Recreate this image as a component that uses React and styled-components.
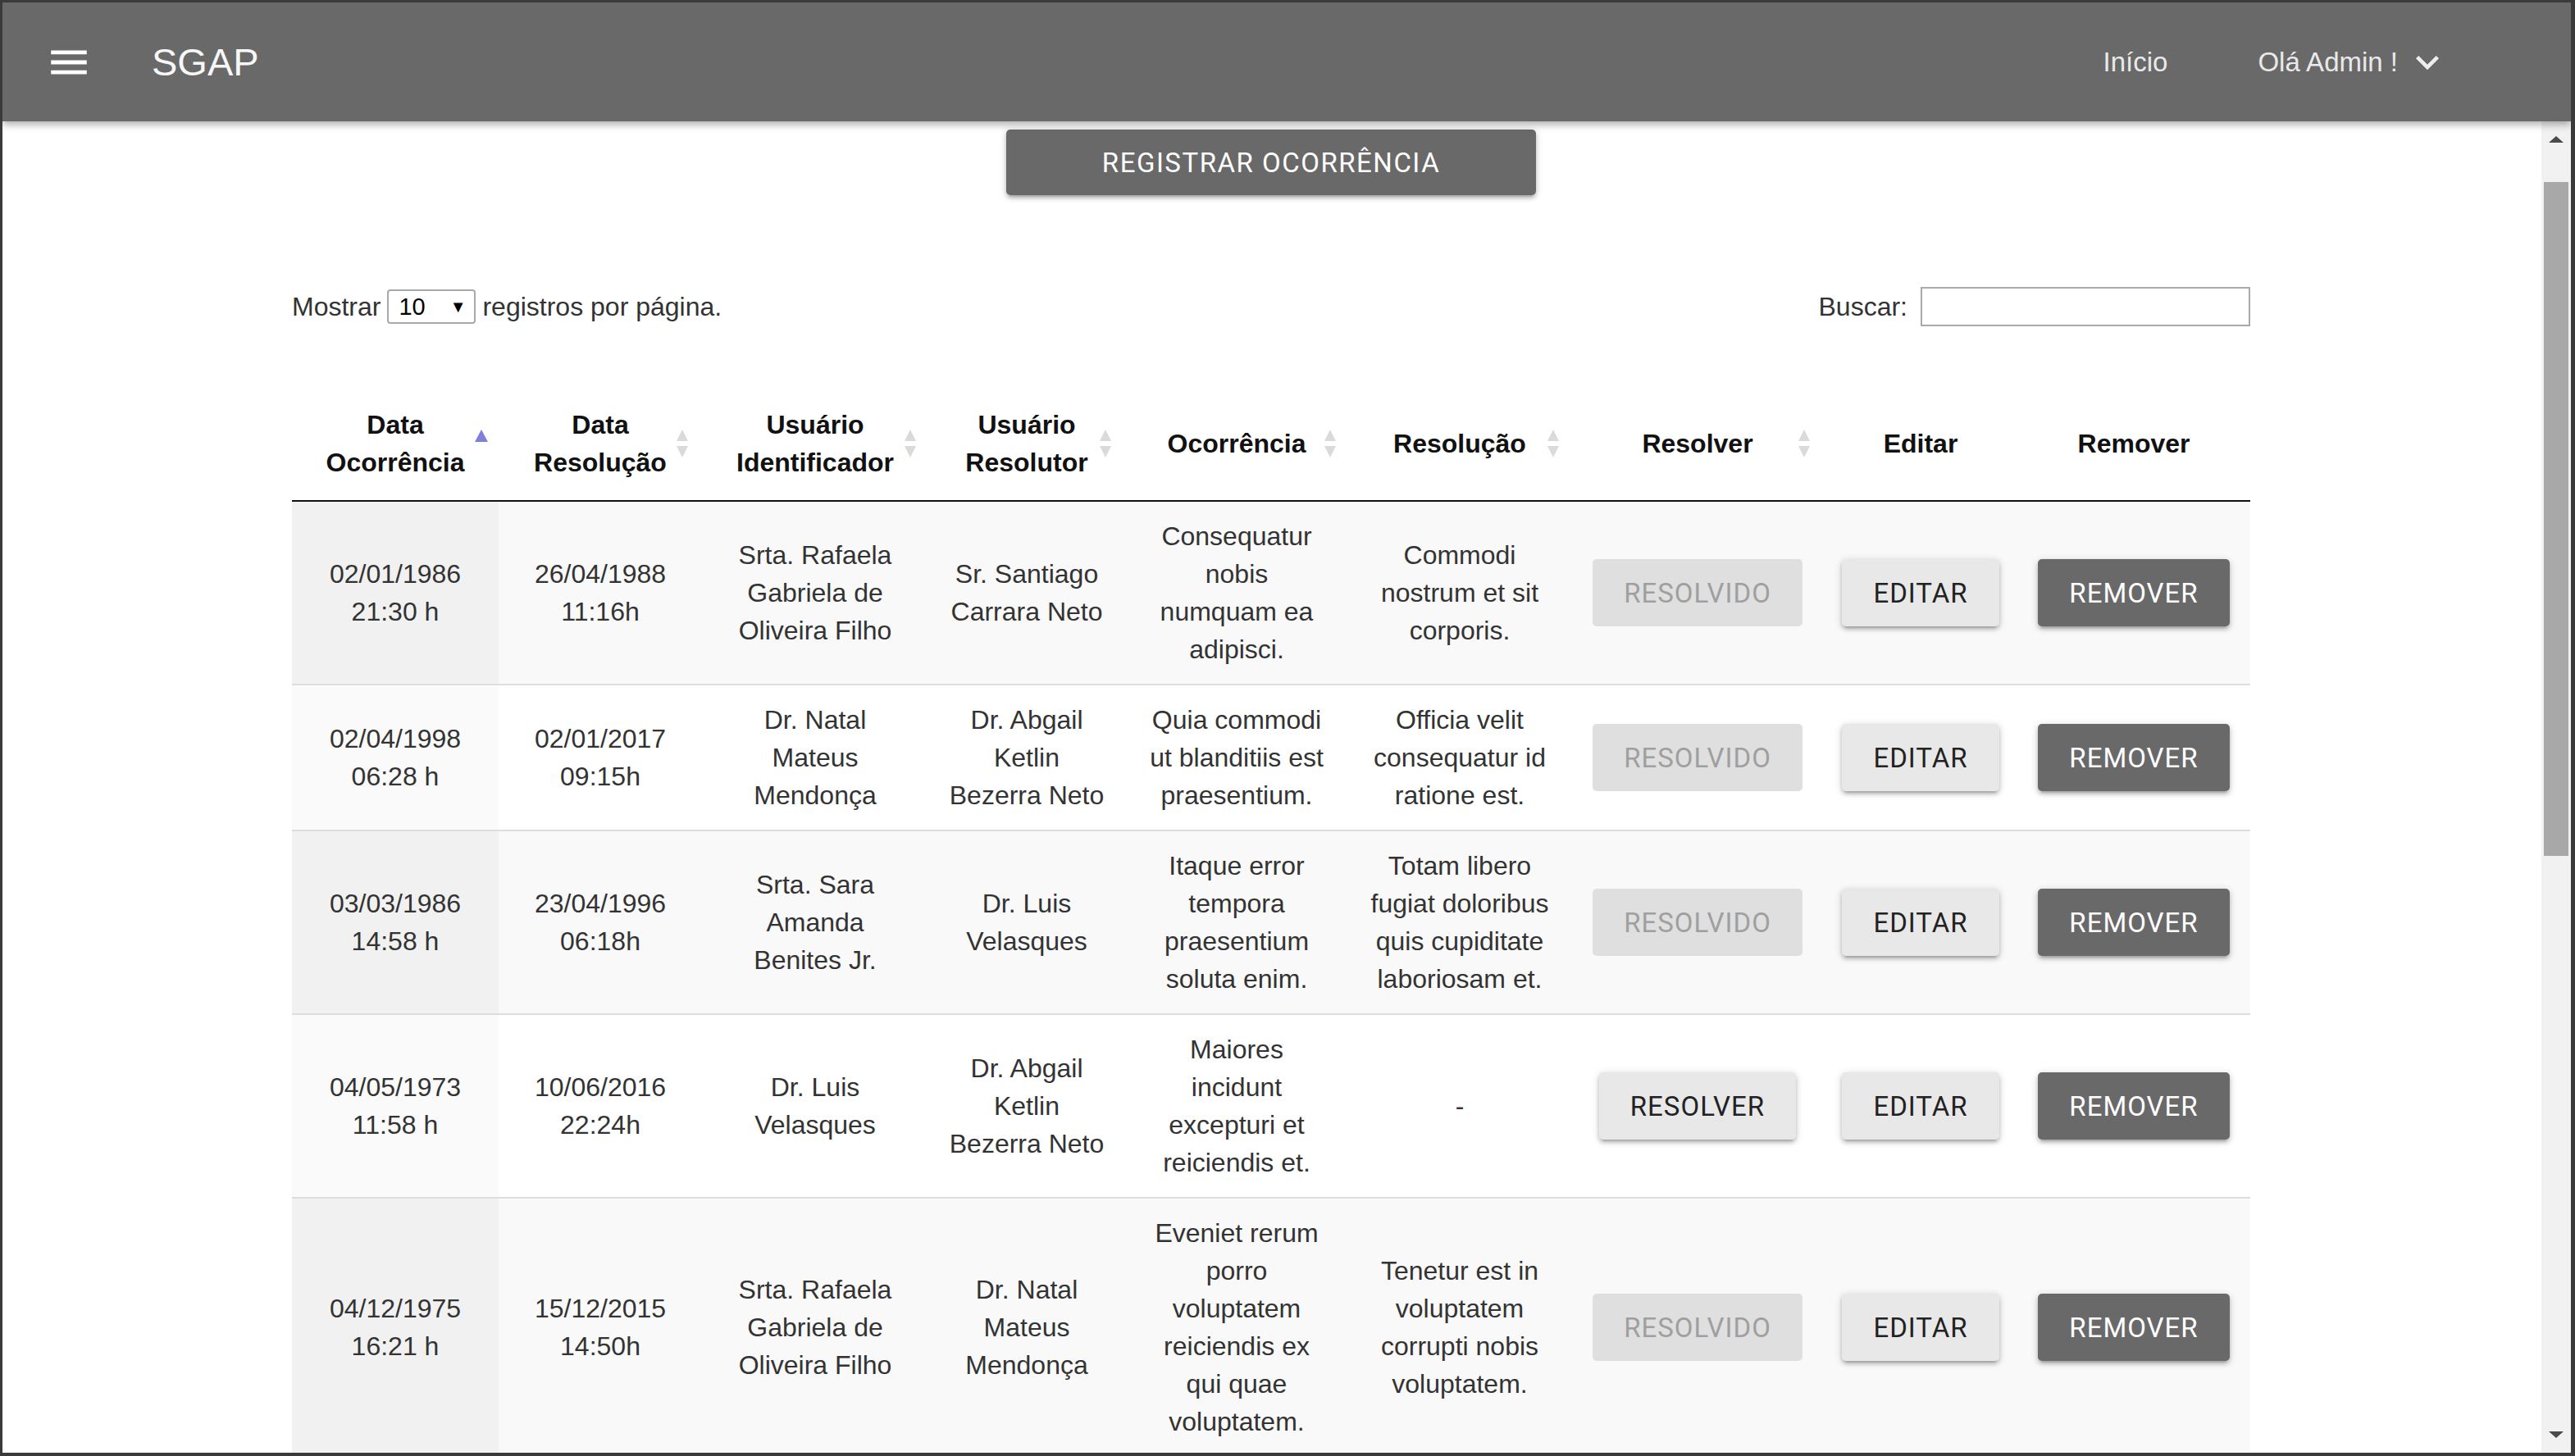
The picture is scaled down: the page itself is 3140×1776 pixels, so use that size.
import React from "react";
import styled, { createGlobalStyle } from "styled-components";

const GlobalStyle = createGlobalStyle`
  html, body { margin: 0; padding: 0; background: #fff; }
  body { font-family: "Liberation Sans", Arial, sans-serif; overflow: hidden; }
  * { box-sizing: border-box; }
`;

const Frame = styled.div`
  width: 3140px;
  height: 1776px;
  border-style: solid;
  border-color: #3a3a3a;
  border-width: 3px 5px 4px 3px;
  display: flex;
  flex-direction: column;
  overflow: hidden;
  background: #fff;
`;

const NavBar = styled.header`
  flex: 0 0 145px;
  background: #696969;
  display: flex;
  align-items: center;
  padding: 0 147px 0 52px;
  position: relative;
  z-index: 2;
  box-shadow: 0 4px 9px rgba(0, 0, 0, 0.32);
`;

const MenuIcon = styled.svg`
  width: 58px;
  height: 58px;
  fill: #fff;
  flex: 0 0 auto;
`;

const Brand = styled.div`
  margin-left: 72px;
  font-size: 47px;
  color: #f7f7f7;
`;

const NavLinks = styled.nav`
  margin-left: auto;
  display: flex;
  align-items: center;
  gap: 110px;
`;

const NavLink = styled.span`
  display: flex;
  align-items: center;
  gap: 8px;
  font-size: 33px;
  color: #e9e9e9;
`;

const Chevron = styled.svg`
  width: 56px;
  height: 56px;
  fill: #eeeeee;
`;

const Body = styled.div`
  flex: 1;
  display: flex;
  min-height: 0;
`;

const Main = styled.main`
  flex: 1;
  overflow: hidden;
  display: flex;
  flex-direction: column;
  align-items: center;
  padding-right: 2px;
`;

const ScrollTrack = styled.div`
  flex: 0 0 36px;
  background: #f1f1f1;
  display: flex;
  flex-direction: column;
  align-items: center;
`;

const ArrowBox = styled.div`
  height: 44px;
  width: 100%;
  display: flex;
  align-items: center;
  justify-content: center;
  margin-top: ${(p) => (p.$down ? "auto" : "0")};
`;

const Arrow = styled.div`
  width: 0;
  height: 0;
  border-left: 9px solid transparent;
  border-right: 9px solid transparent;
  ${(p) =>
    p.$down
      ? "border-top: 8px solid #4a4a4a;"
      : "border-bottom: 8px solid #4a4a4a;"}
`;

const Thumb = styled.div`
  width: 30px;
  height: 822px;
  margin-top: 30px;
  background: #a8a8a8;
`;

const btnShadow =
  "0 4px 4px 0 rgba(0,0,0,0.14), 0 6px 2px -4px rgba(0,0,0,0.12), 0 2px 10px 0 rgba(0,0,0,0.2)";

const RegisterButton = styled.button`
  margin-top: 10px;
  width: 646px;
  height: 80px;
  border: none;
  border-radius: 5px;
  background: #696969;
  color: #fff;
  font-family: Roboto, "Liberation Sans", sans-serif;
  font-size: 33px;
  letter-spacing: 1.5px;
  box-shadow: ${btnShadow};
  flex: 0 0 auto;
`;

const Wrapper = styled.section`
  width: 2388px;
  margin-top: 112px;
  flex: 0 0 auto;
`;

const Controls = styled.div`
  display: flex;
  justify-content: space-between;
  align-items: center;
  height: 48px;
  font-size: 32px;
  color: #333;
`;

const ControlLabel = styled.label`
  display: flex;
  align-items: center;
  gap: ${(p) => p.$gap || 8}px;
`;

const SelectBox = styled.div`
  position: relative;
  width: 108px;
  height: 42px;
`;

const Select = styled.select`
  appearance: none;
  width: 100%;
  height: 100%;
  border: 2px solid #a9a9a9;
  border-radius: 4px;
  background: #fff;
  font-family: "Liberation Sans", Arial, sans-serif;
  font-size: 29px;
  color: #000;
  padding: 0 0 0 12px;
  margin: 0;
`;

const SelectCaret = styled.span`
  position: absolute;
  right: 12px;
  top: 50%;
  transform: translateY(-50%);
  font-size: 20px;
  color: #000;
  pointer-events: none;
`;

const SearchInput = styled.input`
  width: 402px;
  height: 48px;
  border: 2px solid #a9a9a9;
  background: #fff;
  margin: 0;
  padding: 0 6px;
  font-size: 28px;
`;

const Table = styled.table`
  margin-top: 74px;
  width: 2388px;
  table-layout: fixed;
  border-collapse: separate;
  border-spacing: 0;
`;

const Th = styled.th`
  position: relative;
  font-size: 32px;
  font-weight: bold;
  line-height: 46px;
  color: #111;
  text-align: center;
  vertical-align: middle;
  padding: 23px 10px;
  border-bottom: 2px solid #111;
`;

const SortIcon = styled.svg`
  position: absolute;
  right: ${(p) => p.$right}px;
  top: 50%;
  width: 18px;
  height: 36px;
  transform: translateY(-50%);
`;

const Td = styled.td`
  font-size: 32px;
  line-height: 46px;
  color: #333;
  text-align: center;
  vertical-align: middle;
  padding: 19px 16px;
  border-top: ${(p) => (p.$first ? "none" : "2px solid #dddddd")};
  background: ${(p) =>
    p.$odd ? (p.$sorted ? "#f1f1f1" : "#f9f9f9") : p.$sorted ? "#fafafa" : "#ffffff"};
`;

const ActionButton = styled.button`
  height: 82px;
  padding: 0 38px;
  border: none;
  border-radius: 5px;
  font-family: Roboto, "Liberation Sans", sans-serif;
  font-size: 33px;
  letter-spacing: 1px;
  white-space: nowrap;
  background: ${(p) =>
    p.$variant === "dark" ? "#696969" : p.$variant === "disabled" ? "#dfdfdf" : "#e8e8e8"};
  color: ${(p) =>
    p.$variant === "dark" ? "#ffffff" : p.$variant === "disabled" ? "#9f9f9f" : "#222222"};
  box-shadow: ${(p) => (p.$variant === "disabled" ? "none" : btnShadow)};
`;

const colWidths = [252, 248, 276, 240, 272, 272, 308, 236, 284];

const headers = [
  { lines: ["Data", "Ocorrência"], sort: "asc", right: 12 },
  { lines: ["Data", "Resolução"], sort: "both", right: 15 },
  { lines: ["Usuário", "Identificador"], sort: "both", right: 13 },
  { lines: ["Usuário", "Resolutor"], sort: "both", right: 15 },
  { lines: ["Ocorrência"], sort: "both", right: 13 },
  { lines: ["Resolução"], sort: "both", right: 13 },
  { lines: ["Resolver"], sort: "both", right: 15 },
  { lines: ["Editar"] },
  { lines: ["Remover"] },
];

const rows = [
  {
    cells: [
      ["02/01/1986", "21:30 h"],
      ["26/04/1988", "11:16h"],
      ["Srta. Rafaela", "Gabriela de", "Oliveira Filho"],
      ["Sr. Santiago", "Carrara Neto"],
      ["Consequatur", "nobis", "numquam ea", "adipisci."],
      ["Commodi", "nostrum et sit", "corporis."],
    ],
    resolved: true,
  },
  {
    cells: [
      ["02/04/1998", "06:28 h"],
      ["02/01/2017", "09:15h"],
      ["Dr. Natal", "Mateus", "Mendonça"],
      ["Dr. Abgail", "Ketlin", "Bezerra Neto"],
      ["Quia commodi", "ut blanditiis est", "praesentium."],
      ["Officia velit", "consequatur id", "ratione est."],
    ],
    resolved: true,
  },
  {
    cells: [
      ["03/03/1986", "14:58 h"],
      ["23/04/1996", "06:18h"],
      ["Srta. Sara", "Amanda", "Benites Jr."],
      ["Dr. Luis", "Velasques"],
      ["Itaque error", "tempora", "praesentium", "soluta enim."],
      ["Totam libero", "fugiat doloribus", "quis cupiditate", "laboriosam et."],
    ],
    resolved: true,
  },
  {
    cells: [
      ["04/05/1973", "11:58 h"],
      ["10/06/2016", "22:24h"],
      ["Dr. Luis", "Velasques"],
      ["Dr. Abgail", "Ketlin", "Bezerra Neto"],
      ["Maiores", "incidunt", "excepturi et", "reiciendis et."],
      ["-"],
    ],
    resolved: false,
  },
  {
    cells: [
      ["04/12/1975", "16:21 h"],
      ["15/12/2015", "14:50h"],
      ["Srta. Rafaela", "Gabriela de", "Oliveira Filho"],
      ["Dr. Natal", "Mateus", "Mendonça"],
      ["Eveniet rerum", "porro", "voluptatem", "reiciendis ex", "qui quae", "voluptatem."],
      ["Tenetur est in", "voluptatem", "corrupti nobis", "voluptatem."],
    ],
    resolved: true,
  },
];

const Lines = ({ lines }) =>
  lines.map((l, i) => (
    <React.Fragment key={i}>
      {i > 0 && <br />}
      {l}
    </React.Fragment>
  ));

const Sort = ({ type, right }) => (
  <SortIcon $right={right} viewBox="0 0 18 36">
    {type === "asc" ? (
      <polygon points="9,1 17,16 1,16" fill="#7f7fdc" />
    ) : (
      <>
        <polygon points="9,1 16,15 2,15" fill="#dadada" />
        <polygon points="2,21 16,21 9,35" fill="#dadada" />
      </>
    )}
  </SortIcon>
);

export default function App() {
  return (
    <>
      <GlobalStyle />
      <Frame>
        <NavBar>
          <MenuIcon viewBox="0 0 24 24">
            <path d="M3 18h18v-2H3v2zm0-5h18v-2H3v2zm0-7v2h18V6H3z" />
          </MenuIcon>
          <Brand>SGAP</Brand>
          <NavLinks>
            <NavLink>Início</NavLink>
            <NavLink>
              Olá Admin !
              <Chevron viewBox="0 0 24 24">
                <path d="M16.59 8.59L12 13.17 7.41 8.59 6 10l6 6 6-6z" />
              </Chevron>
            </NavLink>
          </NavLinks>
        </NavBar>
        <Body>
          <Main>
            <RegisterButton>REGISTRAR OCORRÊNCIA</RegisterButton>
            <Wrapper>
              <Controls>
                <ControlLabel $gap={8}>
                  Mostrar
                  <SelectBox>
                    <Select defaultValue="10">
                      <option value="10">10</option>
                      <option value="25">25</option>
                      <option value="50">50</option>
                    </Select>
                    <SelectCaret>▼</SelectCaret>
                  </SelectBox>
                  registros por página.
                </ControlLabel>
                <ControlLabel $gap={16}>
                  Buscar:
                  <SearchInput type="search" />
                </ControlLabel>
              </Controls>
              <Table>
                <colgroup>
                  {colWidths.map((w, i) => (
                    <col key={i} style={{ width: w }} />
                  ))}
                </colgroup>
                <thead>
                  <tr>
                    {headers.map((h, i) => (
                      <Th key={i}>
                        <Lines lines={h.lines} />
                        {h.sort && <Sort type={h.sort} right={h.right} />}
                      </Th>
                    ))}
                  </tr>
                </thead>
                <tbody>
                  {rows.map((r, ri) => {
                    const odd = ri % 2 === 0;
                    const first = ri === 0;
                    return (
                      <tr key={ri}>
                        {r.cells.map((c, ci) => (
                          <Td key={ci} $odd={odd} $first={first} $sorted={ci === 0}>
                            <Lines lines={c} />
                          </Td>
                        ))}
                        <Td $odd={odd} $first={first}>
                          {r.resolved ? (
                            <ActionButton $variant="disabled" disabled>
                              RESOLVIDO
                            </ActionButton>
                          ) : (
                            <ActionButton $variant="light">RESOLVER</ActionButton>
                          )}
                        </Td>
                        <Td $odd={odd} $first={first}>
                          <ActionButton $variant="light">EDITAR</ActionButton>
                        </Td>
                        <Td $odd={odd} $first={first}>
                          <ActionButton $variant="dark">REMOVER</ActionButton>
                        </Td>
                      </tr>
                    );
                  })}
                </tbody>
              </Table>
            </Wrapper>
          </Main>
          <ScrollTrack>
            <ArrowBox>
              <Arrow />
            </ArrowBox>
            <Thumb />
            <ArrowBox $down>
              <Arrow $down />
            </ArrowBox>
          </ScrollTrack>
        </Body>
      </Frame>
    </>
  );
}
